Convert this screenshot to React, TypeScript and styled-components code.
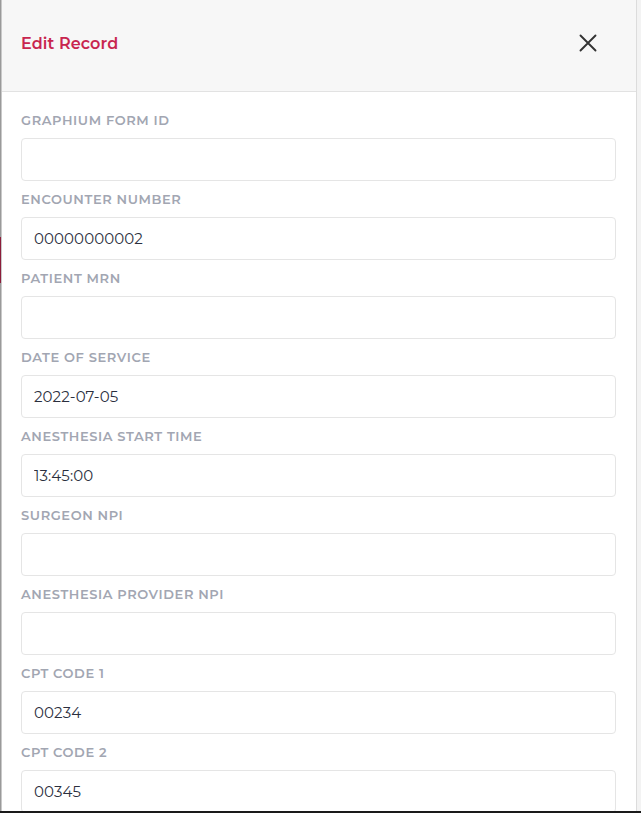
import React from "react";
import styled, { createGlobalStyle } from "styled-components";

const GlobalStyle = createGlobalStyle`
  html, body {
    margin: 0;
    padding: 0;
    background: #8f8f8f;
  }
  * {
    box-sizing: border-box;
  }
`;

const StyledScreen = styled.div`
  width: 641px;
  height: 813px;
  display: flex;
  overflow: hidden;
  border-bottom: 2px solid #1a1a1a;
  font-family: "Montserrat", Inter, "Noto Sans", sans-serif;
`;

const StyledBackdrop = styled.div`
  width: 1px;
  flex-shrink: 0;
  background: linear-gradient(
    to bottom,
    #9a9a9a 0,
    #9a9a9a 237px,
    #8c1d3a 237px,
    #8c1d3a 283px,
    #9a9a9a 283px
  );
`;

const StyledModal = styled.div`
  flex: 1;
  display: flex;
  flex-direction: column;
  background: #ffffff;
  border-left: 1px solid #c9c9c9;
  border-right: 1px solid #dcdcdc;
  overflow: hidden;
`;

const StyledTrack = styled.div`
  width: 4px;
  flex-shrink: 0;
  background: #f3f3f3;
`;

const StyledHeader = styled.div`
  height: 92px;
  flex-shrink: 0;
  display: flex;
  align-items: center;
  justify-content: space-between;
  padding: 0 38px 5px 19px;
  background: #f7f7f7;
  border-bottom: 1px solid #e2e2e2;
`;

const StyledTitle = styled.h2`
  margin: 0;
  font-size: 16px;
  font-weight: 600;
  color: #c8264f;
  letter-spacing: 0.1px;
`;

const StyledClose = styled.button`
  width: 20px;
  height: 20px;
  padding: 0;
  border: none;
  background: none;
  display: flex;
  align-items: center;
  justify-content: center;
  color: #333333;
  cursor: pointer;
`;

const StyledBody = styled.div`
  display: flex;
  flex-direction: column;
  gap: 9px;
  padding: 19px 20px 0 19px;
`;

const StyledField = styled.label`
  display: flex;
  flex-direction: column;
  gap: 9px;
`;

const StyledLabel = styled.span`
  height: 18px;
  line-height: 18px;
  font-size: 13px;
  font-weight: 600;
  letter-spacing: 0.6px;
  text-transform: uppercase;
  color: #a2a6b2;
  white-space: nowrap;
`;

const StyledInput = styled.input`
  height: 43px;
  width: 100%;
  padding: 0 12px;
  border: 1px solid #e5e5e5;
  border-radius: 4px;
  background: #ffffff;
  font-family: "Montserrat", Inter, "Noto Sans", sans-serif;
  font-size: 15px;
  letter-spacing: 0.1px;
  color: #2b2f3e;
  outline: none;
`;

const CloseIcon = () => (
  <svg width="18" height="18" viewBox="0 0 18 18" fill="none">
    <path
      d="M1.5 1.5L16.5 16.5M16.5 1.5L1.5 16.5"
      stroke="currentColor"
      strokeWidth="1.9"
      strokeLinecap="round"
    />
  </svg>
);

const fields = [
  { label: "Graphium Form ID", value: "" },
  { label: "Encounter Number", value: "00000000002" },
  { label: "Patient MRN", value: "" },
  { label: "Date of Service", value: "2022-07-05" },
  { label: "Anesthesia Start Time", value: "13:45:00" },
  { label: "Surgeon NPI", value: "" },
  { label: "Anesthesia Provider NPI", value: "" },
  { label: "CPT Code 1", value: "00234" },
  { label: "CPT Code 2", value: "00345" },
];

const App = () => {
  return (
    <>
      <GlobalStyle />
      <StyledScreen>
        <StyledBackdrop />
        <StyledModal>
          <StyledHeader>
            <StyledTitle>Edit Record</StyledTitle>
            <StyledClose aria-label="Close">
              <CloseIcon />
            </StyledClose>
          </StyledHeader>
          <StyledBody>
            {fields.map((f) => (
              <StyledField key={f.label}>
                <StyledLabel>{f.label}</StyledLabel>
                <StyledInput type="text" defaultValue={f.value} />
              </StyledField>
            ))}
          </StyledBody>
        </StyledModal>
        <StyledTrack />
      </StyledScreen>
    </>
  );
};

export default App;
